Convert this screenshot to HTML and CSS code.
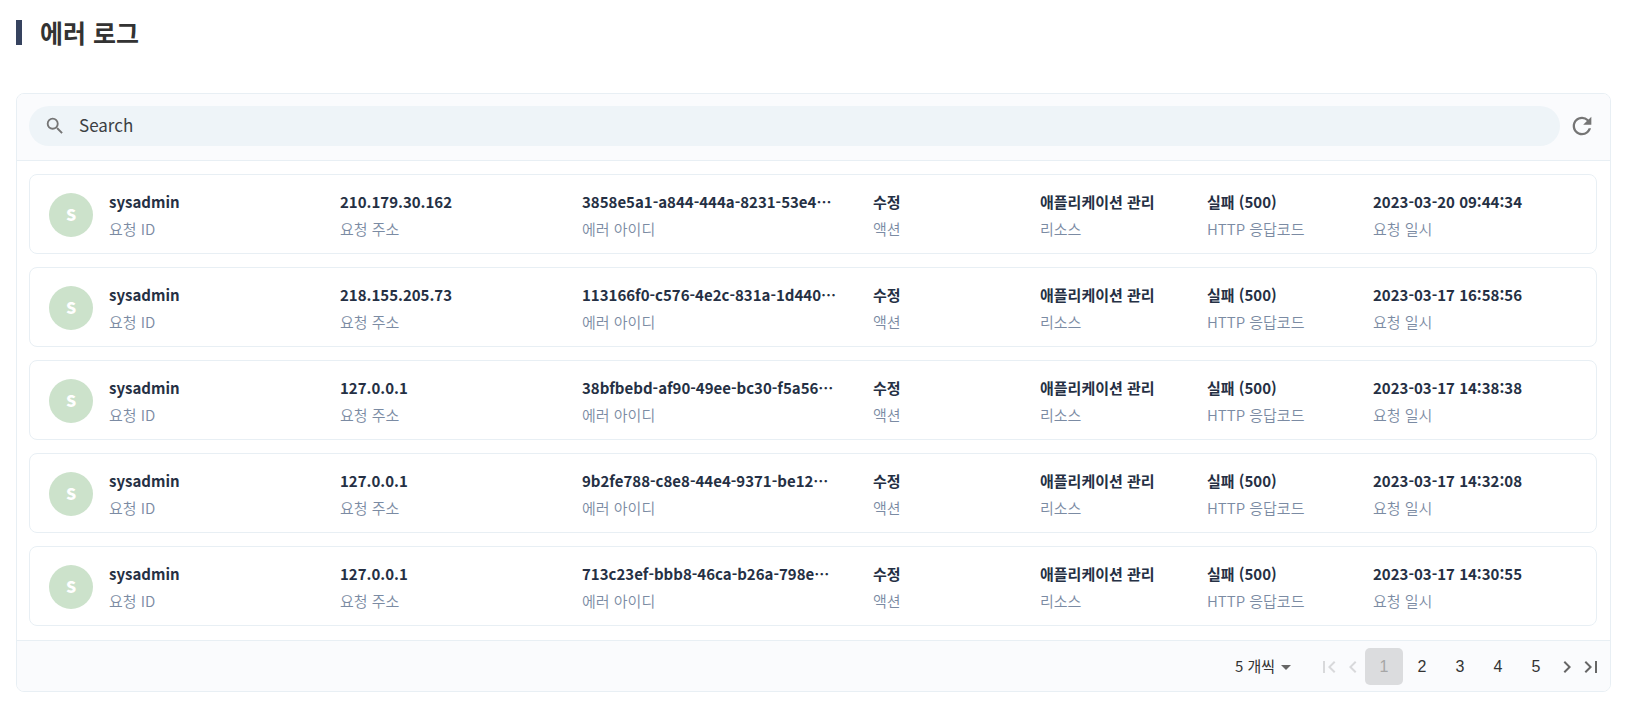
FILE: index.html
```html
<!DOCTYPE html>
<html lang="ko">
<head>
  <meta charset="UTF-8" />
  <meta name="viewport" content="width=device-width, initial-scale=1" />
  <title>에러 로그</title>
  <link rel="stylesheet" href="styles.css">
</head>
<body>

<h1 class="page-title">에러 로그</h1>

<main class="log-card">
  <header class="log-toolbar">
    <label class="search-box">
      <svg class="search-icon" viewBox="0 0 24 24"><path d="M15.5 14h-.79l-.28-.27A6.471 6.471 0 0 0 16 9.5 6.5 6.5 0 1 0 9.5 16c1.61 0 3.09-.59 4.23-1.57l.27.28v.79l5 4.99L20.49 19l-4.99-5zm-6 0C7.01 14 5 11.99 5 9.5S7.01 5 9.5 5 14 7.01 14 9.5 11.99 14 9.5 14z"/></svg>
      <input type="text" class="search-input" placeholder="Search" aria-label="Search" />
    </label>
    <button type="button" class="btn-refresh" aria-label="새로고침">
      <svg viewBox="0 0 24 24"><path d="M17.65 6.35A7.958 7.958 0 0 0 12 4c-4.42 0-7.99 3.58-7.99 8s3.57 8 7.99 8c3.73 0 6.84-2.55 7.73-6h-2.08A5.99 5.99 0 0 1 12 18c-3.31 0-6-2.69-6-6s2.69-6 6-6c1.66 0 3.14.69 4.22 1.78L13 11h7V4l-2.35 2.35z"/></svg>
    </button>
  </header>

  <ul class="log-list" id="logList"></ul>

  <footer class="log-footer">
    <div class="page-size">
      <select class="page-size-select" aria-label="페이지 크기">
        <option>5 개씩</option>
      </select>
    </div>
    <nav class="pagination">
      <button type="button" class="btn-arrow" disabled aria-label="처음"><svg viewBox="0 0 24 24"><path d="M18.41 16.59L13.82 12l4.59-4.59L17 6l-6 6 6 6zM6 6h2v12H6z"/></svg></button>
      <button type="button" class="btn-arrow" disabled aria-label="이전"><svg viewBox="0 0 24 24"><path d="M15.41 7.41L14 6l-6 6 6 6 1.41-1.41L10.83 12z"/></svg></button>
      <button type="button" class="btn-page" disabled>1</button>
      <button type="button" class="btn-page">2</button>
      <button type="button" class="btn-page">3</button>
      <button type="button" class="btn-page">4</button>
      <button type="button" class="btn-page">5</button>
      <button type="button" class="btn-arrow" aria-label="다음"><svg viewBox="0 0 24 24"><path d="M10 6L8.59 7.41 13.17 12l-4.58 4.59L10 18l6-6z"/></svg></button>
      <button type="button" class="btn-arrow" aria-label="마지막"><svg viewBox="0 0 24 24"><path d="M5.59 7.41L10.18 12l-4.59 4.59L7 18l6-6-6-6zM16 6h2v12h-2z"/></svg></button>
    </nav>
  </footer>
</main>

<script src="script.js"></script>
</body>
</html>
```

FILE: styles.css
```css
*, *::before, *::after { margin: 0; padding: 0; box-sizing: border-box; }
body {
  font-family: 'Noto Sans CJK KR', sans-serif;
  background: #fff;
  color: #333;
  padding: 12px 37px 10px 16px;
}
button, input, select {
  font: inherit;
  color: inherit;
  border: none;
  background: none;
  outline: none;
}
svg {
  display: block;
  fill: currentColor;
}

.page-title {
  display: flex;
  align-items: center;
  gap: 18px;
  font-size: 25px;
  line-height: 40px;
  font-weight: bold;
  margin-bottom: 41px;
}
.page-title::before {
  content: "";
  width: 6px;
  height: 25px;
  background: #36435f;
}

.log-card {
  border: 1px solid #e8eff4;
  border-radius: 8px;
  overflow: hidden;
}
.log-toolbar {
  display: flex;
  align-items: center;
  gap: 8px;
  padding: 12px 14px 14px 12px;
  background: #fafbfd;
  border-bottom: 1px solid #e8eff4;
}
.search-box {
  flex: 1;
  display: flex;
  align-items: center;
  gap: 13px;
  height: 40px;
  padding: 0 15px;
  border-radius: 20px;
  background: #eef4f8;
}
.search-icon {
  width: 22px;
  height: 22px;
  color: #757575;
}
.search-input {
  flex: 1;
  height: 36px;
  padding-bottom: 4px;
  font-size: 17px;
}
.search-input::placeholder { color: #3c4043; opacity: 1; }
.btn-refresh {
  width: 28px;
  height: 28px;
  color: #757575;
  cursor: pointer;
}

.log-list {
  list-style: none;
  display: flex;
  flex-direction: column;
  gap: 13px;
  padding: 13px 13px 14px 12px;
}
.log-item {
  display: flex;
  align-items: center;
  gap: 16px;
  height: 80px;
  padding: 2px 20px 0 19px;
  border: 1px solid #e8eff4;
  border-radius: 8px;
}
.avatar {
  width: 44px;
  height: 44px;
  border-radius: 50%;
  background: #cce2cb;
  color: #fff;
  font-size: 16px;
  font-weight: 900;
  line-height: 42px;
  text-align: center;
}
.log-fields {
  flex: 1;
  display: grid;
  grid-template-columns: 231fr 242fr 291fr 167fr 167fr 166fr 203fr;
}
.log-field {
  min-width: 0;
  font-size: 15px;
  line-height: 27px;
  white-space: nowrap;
}
.log-value {
  color: #253044;
  font-weight: bold;
}
.log-label {
  color: #7b8ba3;
  font-weight: 350;
}

.log-footer {
  display: flex;
  justify-content: flex-end;
  align-items: center;
  gap: 26px;
  height: 51px;
  padding: 1px 7px 0;
  background: #fafbfd;
  border-top: 1px solid #e8eff4;
}
.page-size {
  position: relative;
}
.page-size::after {
  content: "";
  position: absolute;
  right: 0;
  top: 12px;
  border: 5px solid transparent;
  border-top-color: #666;
  border-bottom: none;
  pointer-events: none;
}
.page-size-select {
  appearance: none;
  width: 56px;
  height: 28px;
  padding-bottom: 2px;
  font-size: 15px;
  cursor: pointer;
}
.pagination {
  display: flex;
  align-items: center;
}
.btn-arrow {
  width: 24px;
  height: 24px;
  color: #666;
  cursor: pointer;
}
.btn-page {
  width: 38px;
  height: 37px;
  border-radius: 5px;
  font-family: 'Liberation Sans', Arial, sans-serif;
  font-size: 16px;
  cursor: pointer;
}
.btn-page:disabled {
  background: #dbdcde;
  color: #a6a6a6;
}
.btn-arrow:disabled { color: #d8d9db; }
```

FILE: script.js
```js
const logs = [
  { user: "sysadmin", ip: "210.179.30.162", errorId: "3858e5a1-a844-444a-8231-53e4…", date: "2023-03-20 09:44:34" },
  { user: "sysadmin", ip: "218.155.205.73", errorId: "113166f0-c576-4e2c-831a-1d440…", date: "2023-03-17 16:58:56" },
  { user: "sysadmin", ip: "127.0.0.1", errorId: "38bfbebd-af90-49ee-bc30-f5a56…", date: "2023-03-17 14:38:38" },
  { user: "sysadmin", ip: "127.0.0.1", errorId: "9b2fe788-c8e8-44e4-9371-be12…", date: "2023-03-17 14:32:08" },
  { user: "sysadmin", ip: "127.0.0.1", errorId: "713c23ef-bbb8-46ca-b26a-798e…", date: "2023-03-17 14:30:55" },
];

const logList = document.getElementById("logList");

function field(value, label) {
  return `
    <div class="log-field">
      <div class="log-value">${value}</div>
      <div class="log-label">${label}</div>
    </div>`;
}

logs.forEach(log => {
  const item = document.createElement("li");
  item.className = "log-item";
  item.innerHTML = `
    <div class="avatar">${log.user[0].toUpperCase()}</div>
    <div class="log-fields">
      ${field(log.user, "요청 ID")}
      ${field(log.ip, "요청 주소")}
      ${field(log.errorId, "에러 아이디")}
      ${field("수정", "액션")}
      ${field("애플리케이션 관리", "리소스")}
      ${field("실패 (500)", "HTTP 응답코드")}
      ${field(log.date, "요청 일시")}
    </div>
  `;
  logList.appendChild(item);
});
```
